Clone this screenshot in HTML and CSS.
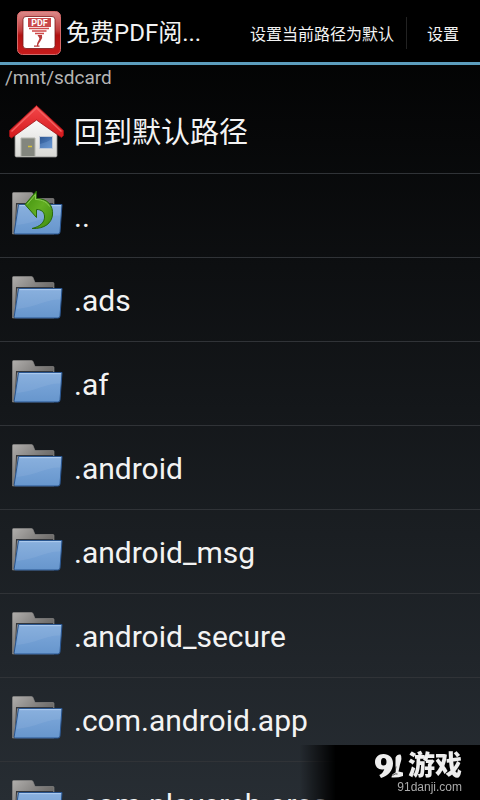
FILE: index.html
```html
<!DOCTYPE html>
<html lang="zh-CN">
<head>
  <meta charset="UTF-8" />
  <meta name="viewport" content="width=device-width, initial-scale=1" />
  <title>免费PDF阅读器</title>
  <link rel="stylesheet" href="styles.css">
</head>
<body>

<!-- shared icons -->
<svg class="sprite" aria-hidden="true">
  <defs>
    <linearGradient id="backGrad" x1="0" y1="0" x2="1" y2="1">
      <stop offset="0" stop-color="#b0aeac" />
      <stop offset="0.5" stop-color="#777573" />
      <stop offset="1" stop-color="#4c4b4a" />
    </linearGradient>
    <linearGradient id="frontGrad" x1="0" y1="0" x2="0" y2="1">
      <stop offset="0" stop-color="#80aadc" />
      <stop offset="1" stop-color="#6796cd" />
    </linearGradient>
    <linearGradient id="upGrad" x1="0" y1="0" x2="1" y2="1">
      <stop offset="0" stop-color="#3f8f0c" />
      <stop offset="0.5" stop-color="#62ae22" />
      <stop offset="1" stop-color="#3d8a10" />
    </linearGradient>
    <linearGradient id="wallGrad" x1="0" y1="0" x2="0" y2="1">
      <stop offset="0" stop-color="#ffffff" />
      <stop offset="1" stop-color="#d8d8d4" />
    </linearGradient>
    <linearGradient id="roofGrad" x1="0" y1="0" x2="0" y2="1">
      <stop offset="0" stop-color="#f4484a" />
      <stop offset="1" stop-color="#d3181c" />
    </linearGradient>
    <linearGradient id="paneGrad" x1="0" y1="0" x2="1" y2="1">
      <stop offset="0" stop-color="#2c5590" />
      <stop offset="1" stop-color="#5c8fd0" />
    </linearGradient>
    <linearGradient id="logoGrad" x1="0" y1="0" x2="0" y2="1">
      <stop offset="0" stop-color="#dc8a8a" />
      <stop offset="0.45" stop-color="#c03a3a" />
      <stop offset="0.55" stop-color="#b01212" />
      <stop offset="1" stop-color="#c81c1c" />
    </linearGradient>
  </defs>

  <symbol id="folder" viewBox="0 0 56 56">
    <path d="M4.500 4.500q0-1 1-1h18q1 0 1.500 1l2 5h18q1 0 1 1V45H4.500z" fill="url(#backGrad)" stroke="#8f8d8b" stroke-width="0.600" />
    <path d="M7 44 9 15.500h36v-1.500H8z" fill="#33363b" />
    <path d="M10.500 15.500h43.500l-2 27.500q-.2 2-2 2H7.500q-1.500 0-1.300-1.500z" fill="url(#frontGrad)" stroke="#29558f" stroke-width="1" />
    <path d="M11.500 16.700h41.500" stroke="#b4d0f0" stroke-width="1" />
    <path d="M11 17.500h41.800l-.7 9C39 26 28 34 9 36z" fill="#fff" opacity="0.070" />
  </symbol>

  <symbol id="up" viewBox="0 0 56 56">
    <use href="#folder" />
    <path d="M17 15.500 28.500 2v7.500C40 9.500 45.500 17 44.500 26 43.500 34 37 40 24 39.500c8.500-2 13-6.500 12.500-12.500-.4-4-3-6.500-8-6.500V28.500z" fill="url(#upGrad)" stroke="#28680a" stroke-width="1" stroke-linejoin="round" />
    <path d="M19 15.500 27.500 5.500v5c7 0 12 3 14 7" fill="none" stroke="#8ccc55" stroke-width="1" />
  </symbol>

  <symbol id="home" viewBox="0 0 56 56">
    <path d="M7 27 28 9l21 18v23.500q0 1.500-1.500 1.500h-39Q7 52 7 50.500z" fill="url(#wallGrad)" stroke="#8b8b88" stroke-width="0.800" />
    <path d="M13 51.500V33h14v18.500z" fill="#83867e" stroke="#b4b5ae" stroke-width="1" />
    <path d="M20 41.500h4" stroke="#d8c33a" stroke-width="1.500" />
    <path d="M31.500 31.500h13v12h-13z" fill="url(#paneGrad)" stroke="#c3cbd8" stroke-width="1" />
    <path d="M32 39q6-1 12-5v9.500H32z" fill="#8fb8e8" opacity="0.250" />
    <path d="M28.500 0.500 55.500 25.500v5l-2 2L28.500 15 3.500 33 1.500 31.500v-6z" fill="url(#roofGrad)" stroke="#9c1014" stroke-width="0.800" stroke-linejoin="round" />
    <path d="M3.500 26.500 28.500 3l25 23.500" fill="none" stroke="#f46060" stroke-width="1.500" />
  </symbol>
</svg>

<header class="action-bar">
  <svg class="app-icon" viewBox="0 0 44 44" aria-hidden="true">
    <rect x="0.500" y="0.500" width="43" height="43" rx="5" fill="url(#logoGrad)" stroke="#d46a6a" />
    <rect x="6" y="5.500" width="32" height="32" rx="3" fill="#fff" stroke="#7a1a1a" stroke-width="0.800" />
    <rect x="11" y="7" width="23" height="9" fill="#c9484a" />
    <text class="app-icon-text" x="22.500" y="15" text-anchor="middle">PDF</text>
    <path d="M12 17.500h20M15 20h14.500M18 22.500h9" stroke="#cf4a4a" stroke-width="1.500" />
    <path d="M20.500 24h4.500q1 3-1.500 6-2 2.500-2.500 5h-1.200q.2-3.500 2-6 1.200-2 .2-2.500zM17 34.500h5.500v1.200H17z" fill="#b83a3a" />
  </svg>
  <h1 class="app-title">免费PDF阅...</h1>
  <button class="action" type="button">设置当前路径为默认</button>
  <button class="action action-last" type="button">设置</button>
</header>

<main class="browser">
  <p class="current-path">/mnt/sdcard</p>
  <ul class="file-list">
    <li><button class="file file-home" type="button"><svg class="file-icon"><use href="#home" /></svg><span>回到默认路径</span></button></li>
    <li><button class="file" type="button"><svg class="file-icon"><use href="#up" /></svg><span>..</span></button></li>
    <li><button class="file" type="button"><svg class="file-icon"><use href="#folder" /></svg><span>.ads</span></button></li>
    <li><button class="file" type="button"><svg class="file-icon"><use href="#folder" /></svg><span>.af</span></button></li>
    <li><button class="file" type="button"><svg class="file-icon"><use href="#folder" /></svg><span>.android</span></button></li>
    <li><button class="file" type="button"><svg class="file-icon"><use href="#folder" /></svg><span>.android_msg</span></button></li>
    <li><button class="file" type="button"><svg class="file-icon"><use href="#folder" /></svg><span>.android_secure</span></button></li>
    <li><button class="file" type="button"><svg class="file-icon"><use href="#folder" /></svg><span>.com.android.app</span></button></li>
    <li><button class="file" type="button"><svg class="file-icon"><use href="#folder" /></svg><span>.com.playerch.oreo</span></button></li>
  </ul>
</main>

<aside class="site-badge">
  <div class="site-name">
    <svg class="site-logo" viewBox="0 0 28 24" role="img" aria-label="91">
      <path d="M8.500 0C3.500 0 0 3.500 0 8s3 7.500 7 7.500c1 0 1.800-.2 2.300-.6-.6 2.600-2.300 4.600-5 6.100L6 24c7.500-2 12-8 12-14.500C18 3.500 14 0 8.500 0zm0 4c2 0 3 1.500 3 4s-1 3.500-3 3.500S6 10.500 6 8s.8-4 2.500-4z" fill="#eee" fill-rule="evenodd" />
      <path d="M20.500 3.500q1.500-3.500 5-3 2 3-.5 10l-1.500 7 4.500 1v3.500q-5 2-11.500 1.500 0-3.500 4-5z" fill="#eee" />
      <path d="M21 12.500 20 18M17.500 21.500q3-2.500 5-1.500" stroke="#222" stroke-width="0.800" fill="none" />
    </svg>
    <span>游戏</span>
  </div>
  <a class="site-link" href="#">91danji.com</a>
</aside>

</body>
</html>
```

FILE: styles.css
```css
* {
  box-sizing: border-box;
}
body {
  margin: 0;
  height: 100vh;
  overflow: hidden;
  display: flex;
  flex-direction: column;
  font-family: Roboto, "Noto Sans CJK SC", sans-serif;
  color: #f3f3f3;
  background: linear-gradient(#000, #272d33);
}
button {
  font: inherit;
  color: inherit;
  background: none;
  border: none;
  padding: 0;
  cursor: pointer;
}
.sprite {
  position: absolute;
  width: 0;
  height: 0;
}

/* top bar */
.action-bar {
  display: flex;
  align-items: center;
  flex-shrink: 0;
  height: 65px;
  padding: 4px 1px 0 17px;
  background: #000;
  border-bottom: 3px solid #5c9dbd;
}
.app-icon {
  width: 44px;
  height: 44px;
  margin-right: 5px;
  flex-shrink: 0;
}
.app-icon-text {
  font-size: 9px;
  font-weight: bold;
  fill: #fff;
}
.app-title {
  flex: 1;
  min-width: 0;
  margin: 0;
  font-size: 24px;
  line-height: 36px;
  font-weight: normal;
  white-space: nowrap;
  overflow: hidden;
  text-overflow: ellipsis;
}
.action {
  flex-shrink: 0;
  height: 32px;
  padding: 0 12px;
  font-size: 16px;
}
.action-last {
  padding: 0 20px;
  border-left: 1px solid #222;
}

/* file browser */
.browser {
  flex: 1;
  min-height: 0;
  overflow: hidden;
}
.current-path {
  margin: 0;
  padding-left: 5px;
  font-size: 19px;
  line-height: 25px;
  color: #b4b4b4;
}
.file-list {
  list-style: none;
  margin: 0;
  padding: 0;
}
.file {
  display: flex;
  align-items: center;
  gap: 10px;
  width: 100%;
  height: 84px;
  padding: 2px 8px 0;
  font-size: 30px;
  line-height: 40px;
  text-align: left;
  border-bottom: 1px solid #303337;
}
.file-home {
  font-size: 29px;
}
.file-icon {
  width: 56px;
  height: 56px;
  flex-shrink: 0;
}

/* site badge over the list */
.site-badge {
  position: fixed;
  right: 0;
  bottom: 0;
  width: 180px;
  height: 55px;
  padding: 7px 18px 0 0;
  display: flex;
  flex-direction: column;
  align-items: flex-end;
  background: linear-gradient(to right, transparent, #000 36px);
}
.site-name {
  display: flex;
  align-items: center;
  gap: 5px;
  font-size: 27px;
  font-weight: 900;
  line-height: 28px;
  color: #eee;
}
.site-logo {
  width: 28px;
  height: 24px;
}
.site-link {
  font-family: "Liberation Sans", sans-serif;
  font-size: 12px;
  line-height: 14px;
  color: #aaa;
  text-decoration: none;
}
```
